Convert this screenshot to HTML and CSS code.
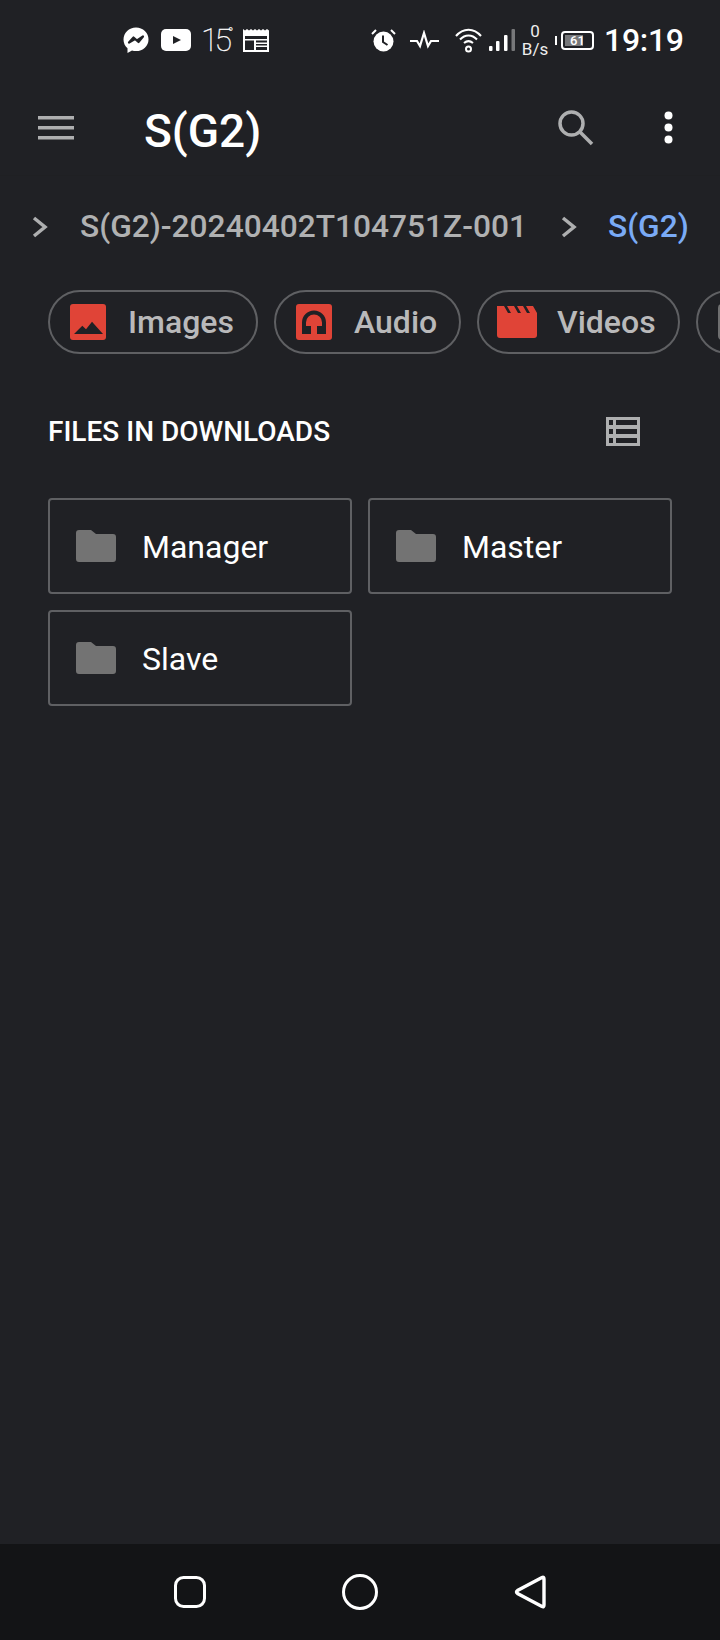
FILE: index.html
```html
<!DOCTYPE html>
<html lang="en">
<head>
<meta charset="utf-8">
<title>S(G2)</title>
<link rel="stylesheet" href="styles.css">
</head>
<body>
<div class="screen">
  <div class="status">
    <svg class="s-msg" width="26" height="27" viewBox="0 0 26 27"><path fill="#fff" d="M13 .5C6 .5.5 5.600.5 12.400c0 3.600 1.500 6.600 4 8.800v4.800l4.500-2.500c1.300.4 2.600.6 4 .6 7 0 12.500-5.100 12.500-11.700S20 .5 13 .5z"/><path fill="none" stroke="#202125" stroke-width="2.200" stroke-linejoin="round" d="M6 15.500l4.500-5 3.500 3 6-4-4.500 5.500-3.500-3z"/></svg>
    <svg class="s-yt" width="30" height="22" viewBox="0 0 30 22"><rect width="30" height="22" rx="5" fill="#fff"/><path fill="#202125" d="M12 7l8 4-8 4z"/></svg>
    <span class="s-temp">15<sup class="deg">°</sup></span>
    <svg class="s-cal" width="26" height="23" viewBox="0 0 26 23"><path fill="#fff" d="M0 0l2 1.500L4 0l2 1.500L8 0l2 1.500L12 0l2 1.500L16 0l2 1.500L20 0l2 1.500L24 0l2 1.500V23H0z"/><path fill="#202125" d="M2 7h22v3H2zM2 11.500h9V21H2zM13 11.500h11v2H13zM13 15h11v1.500H13zM13 18h11v3H13z"/></svg>
    <svg class="s-alarm" width="25" height="23" viewBox="0 0 25 23"><circle cx="12.500" cy="12.500" r="10" fill="#fff"/><path fill="none" stroke="#202125" stroke-width="2" d="M12 6.500v6.500l4.500 3"/><path fill="none" stroke="#fff" stroke-width="2" d="M1 5l4-4M24 5l-4-4"/></svg>
    <svg class="s-pulse" width="29" height="20" viewBox="0 0 29 20"><path fill="none" stroke="#fff" stroke-width="2.200" d="M0 11h7l3 5 4-13 4 13 3-5h8"/></svg>
    <svg class="s-wifi" width="27" height="25" viewBox="0 0 27 25"><g fill="none" stroke="#fff" stroke-width="2"><path d="M1 8C8-.5 19-.5 26 8"/><path d="M5 11.500c5-5.500 12-5.500 17 0"/><path d="M9 15c3-2.500 6-2.500 9 0"/><circle cx="13.500" cy="21" r="2.500"/></g></svg>
    <svg class="s-sig" width="26" height="22" viewBox="0 0 26 22"><rect y="17" width="3.500" height="5" rx="1" fill="#fff"/><rect x="7" y="12" width="3.500" height="10" rx="1" fill="#fff"/><rect x="15" y="6" width="3.500" height="16" rx="1" fill="#fff"/><rect x="22.500" width="3.500" height="22" rx="1" fill="#77787a"/></svg>
    <span class="s-net"><span>0</span><span>B/s</span></span>
    <span class="s-batt">
      <span class="batt-cap"></span>
      <span class="batt-body"><span class="batt-fill"></span><span class="batt-num">61</span></span>
    </span>
    <span class="s-time">19:19</span>
  </div>

  <header class="appbar">
    <svg class="a-menu" width="36" height="24" viewBox="0 0 36 24"><path fill="#aeafb0" d="M0 0h36v3.500H0zM0 10h36v3.500H0zM0 20h36v3.500H0z"/></svg>
    <h1 class="a-title">S(G2)</h1>
    <svg class="a-search" width="36" height="36" viewBox="0 0 36 36"><circle cx="13.500" cy="13.500" r="11.500" fill="none" stroke="#aeafb0" stroke-width="3.500"/><path stroke="#aeafb0" stroke-width="3.500" d="M21.500 21.500L34 34"/></svg>
    <svg class="a-more" width="9" height="33" viewBox="0 0 9 33"><circle cx="4.500" cy="4.500" r="4" fill="#fff"/><circle cx="4.500" cy="16.500" r="4" fill="#fff"/><circle cx="4.500" cy="28.500" r="4" fill="#fff"/></svg>
  </header>

  <nav class="crumbs">
    <svg class="chev" width="16" height="22" viewBox="0 0 16 22"><path fill="none" stroke="#aeafb0" stroke-width="3.500" d="M2 2l11 9-11 9"/></svg>
    <span class="crumb">S(G2)-20240402T104751Z-001</span>
    <svg class="chev chev2" width="16" height="22" viewBox="0 0 16 22"><path fill="none" stroke="#aeafb0" stroke-width="3.500" d="M2 2l11 9-11 9"/></svg>
    <span class="crumb crumb-on">S(G2)</span>
  </nav>

  <div class="chips">
    <div class="chip chip-img">
      <svg width="36" height="36" viewBox="0 0 36 36"><rect width="36" height="36" rx="3" fill="#e04437"/><path fill="#202125" d="M4 30l8.300-8.300 3.700 3.500 6-7.500 11 12.300z"/></svg>
      <span>Images</span>
    </div>
    <div class="chip chip-aud">
      <svg width="36" height="36" viewBox="0 0 36 36"><rect width="36" height="36" rx="3" fill="#e04437"/><path fill="none" stroke="#202125" stroke-width="4" d="M8 29V18.500a10 10 0 0 1 20 0V29"/><path fill="#202125" d="M6 22h9v8H6zM21 22h9v8H21z"/></svg>
      <span>Audio</span>
    </div>
    <div class="chip chip-vid">
      <svg width="40" height="32" viewBox="0 0 40 32"><path fill="#e04437" d="M0 0h40v29a3 3 0 0 1-3 3H3a3 3 0 0 1-3-3z"/><path fill="#202125" d="M7 0h3l4 7h-3zM17 0h3l4 7h-3zM26 0h3l4 7h-3zM36 0h4v7z"/></svg>
      <span>Videos</span>
    </div>
    <div class="chip chip-doc">
      <svg width="36" height="36" viewBox="0 0 36 36"><rect width="36" height="36" rx="4" fill="#6f6f70"/></svg>
    </div>
  </div>

  <div class="section">
    <h2 class="sec-title">FILES IN DOWNLOADS</h2>
    <svg class="sec-view" width="34" height="29" viewBox="0 0 34 29"><path fill="#aeafb0" fill-rule="evenodd" d="M0 0h34v29H0zM3 3v5h4V3zM10 3v5h21V3zM3 12v5h4v-5zM10 12v5h21v-5zM3 21v5h4v-5zM10 21v5h21v-5z"/></svg>
  </div>

  <div class="grid">
    <div class="card"><svg width="40" height="32" viewBox="0 0 40 32"><path fill="#737373" d="M3 0h12l5 4h17a3 3 0 0 1 3 3v22a3 3 0 0 1-3 3H3a3 3 0 0 1-3-3V3a3 3 0 0 1 3-3z"/></svg><span>Manager</span></div>
    <div class="card"><svg width="40" height="32" viewBox="0 0 40 32"><path fill="#737373" d="M3 0h12l5 4h17a3 3 0 0 1 3 3v22a3 3 0 0 1-3 3H3a3 3 0 0 1-3-3V3a3 3 0 0 1 3-3z"/></svg><span>Master</span></div>
    <div class="card"><svg width="40" height="32" viewBox="0 0 40 32"><path fill="#737373" d="M3 0h12l5 4h17a3 3 0 0 1 3 3v22a3 3 0 0 1-3 3H3a3 3 0 0 1-3-3V3a3 3 0 0 1 3-3z"/></svg><span>Slave</span></div>
  </div>

  <footer class="navbar">
    <svg class="n-sq" width="32" height="32" viewBox="0 0 32 32"><rect x="1.500" y="1.500" width="29" height="29" rx="8" fill="none" stroke="#fff" stroke-width="3"/></svg>
    <svg class="n-ci" width="36" height="36" viewBox="0 0 36 36"><circle cx="18" cy="18" r="16.500" fill="none" stroke="#fff" stroke-width="3"/></svg>
    <svg class="n-tr" width="32" height="34" viewBox="0 0 32 34"><path fill="none" stroke="#fff" stroke-width="3.400" stroke-linecap="round" d="M28 2.500Q30 1.500 30 4V30Q30 32.500 28 31.500L3.500 18.500Q1.500 17 3.500 15.500Z"/></svg>
  </footer>
</div>
</body>
</html>
```
FILE: styles.css
```css
* { box-sizing: border-box; }
html, body { margin: 0; padding: 0; }
body { background: #202125; font-family: Roboto, "Noto Sans", sans-serif; }
svg { display: block; flex: none; }
h1, h2 { margin: 0; }

.screen {
  width: 720px;
  height: 1640px;
  display: flex;
  flex-direction: column;
  overflow: hidden;
  background: #202125;
}

/* status bar */
.status {
  height: 80px;
  display: flex;
  align-items: center;
  padding-left: 123px;
  color: #fff;
}
.s-yt { margin-left: 12px; }
.s-temp {
  width: 40px;
  margin-left: 10px;
  font-size: 32px;
  font-weight: 100;
  letter-spacing: -4px;
  line-height: 32px;
  -webkit-text-stroke: 0.3px #fff;
}
.deg { font-size: 14px; line-height: 0; vertical-align: 13px; letter-spacing: 0; }
.s-cal { margin-left: 2px; }
.s-alarm { margin-left: 102px; }
.s-pulse { margin-left: 14px; }
.s-wifi { margin-left: 16px; }
.s-sig { margin-left: 7px; }
.s-net {
  width: 26px;
  margin-left: 7px;
  display: flex;
  flex-direction: column;
  align-items: center;
  font-size: 17px;
  line-height: 18px;
  color: #eee;
}
.s-batt { margin-left: 7px; display: flex; align-items: center; gap: 4px; }
.batt-cap { width: 2px; height: 9px; background: #fff; }
.batt-body {
  position: relative;
  width: 33px;
  height: 19px;
  border: 2px solid #fff;
  border-radius: 4px;
  overflow: hidden;
}
.batt-fill { position: absolute; left: 0; top: 0; bottom: 0; width: 61%; margin: 2px; background: #77787a; }
.batt-num {
  position: absolute;
  inset: 0;
  text-align: center;
  font-size: 13px;
  line-height: 15px;
  font-weight: 500;
}
.s-time { margin-left: 10px; font-size: 32px; font-weight: 500; line-height: 32px; letter-spacing: -0.3px; }

/* app bar */
.appbar {
  height: 96px;
  display: flex;
  align-items: center;
  padding-left: 38px;
  border-bottom: 1px solid #1f2023;
}
.a-title { margin: 6px 0 0 70px; font-size: 46px; font-weight: 500; color: #fff; line-height: 50px; flex: 1; }
.a-search { margin-right: 70px; }
.a-more { margin-right: 47px; }

/* breadcrumb */
.crumbs {
  height: 50px;
  margin-top: 26px;
  display: flex;
  align-items: center;
  padding-left: 32px;
  white-space: nowrap;
}
.crumb { font-size: 31.700px; font-weight: 500; color: #b0b1b2; line-height: 40px; }
.chev + .crumb { margin-left: 32px; }
.chev2 { margin-left: 34px; }
.chev2 + .crumb { margin-left: 31px; }
.crumb-on { color: #7aabf6; }

/* chips */
.chips {
  margin-top: 38px;
  padding-left: 48px;
  display: flex;
  gap: 16px;
  flex: none;
}
.chip {
  height: 64px;
  flex: none;
  display: flex;
  align-items: center;
  padding-left: 20px;
  border: 2px solid #5f6063;
  border-radius: 32px;
  font-size: 32px;
  font-weight: 500;
  color: #b9b9ba;
}
.chip span { margin-left: 22px; }
.chip-img { width: 210px; }
.chip-aud { width: 187px; }
.chip-vid { width: 203px; padding-left: 18px; }
.chip-vid span { margin-left: 20px; }
.chip-doc { width: 260px; }

/* section header */
.section {
  margin-top: 48px;
  height: 58px;
  display: flex;
  align-items: center;
  justify-content: space-between;
  padding: 0 80px 0 48px;
}
.sec-title { font-size: 28px; font-weight: 500; color: #fff; }

/* folder grid */
.grid {
  margin-top: 38px;
  padding: 0 48px;
  display: grid;
  grid-template-columns: 304px 304px;
  grid-auto-rows: 96px;
  gap: 16px;
}
.card {
  display: flex;
  align-items: center;
  padding-left: 26px;
  border: 2px solid #5f6063;
  border-radius: 4px;
  font-size: 32px;
  color: #fff;
}
.card span { margin-left: 26px; padding-top: 1px; }

/* nav bar */
.navbar {
  margin-top: auto;
  height: 96px;
  background: #131416;
  display: flex;
  align-items: center;
  padding-left: 174px;
}
.n-ci { margin-left: 136px; }
.n-tr { margin-left: 136px; }
```
